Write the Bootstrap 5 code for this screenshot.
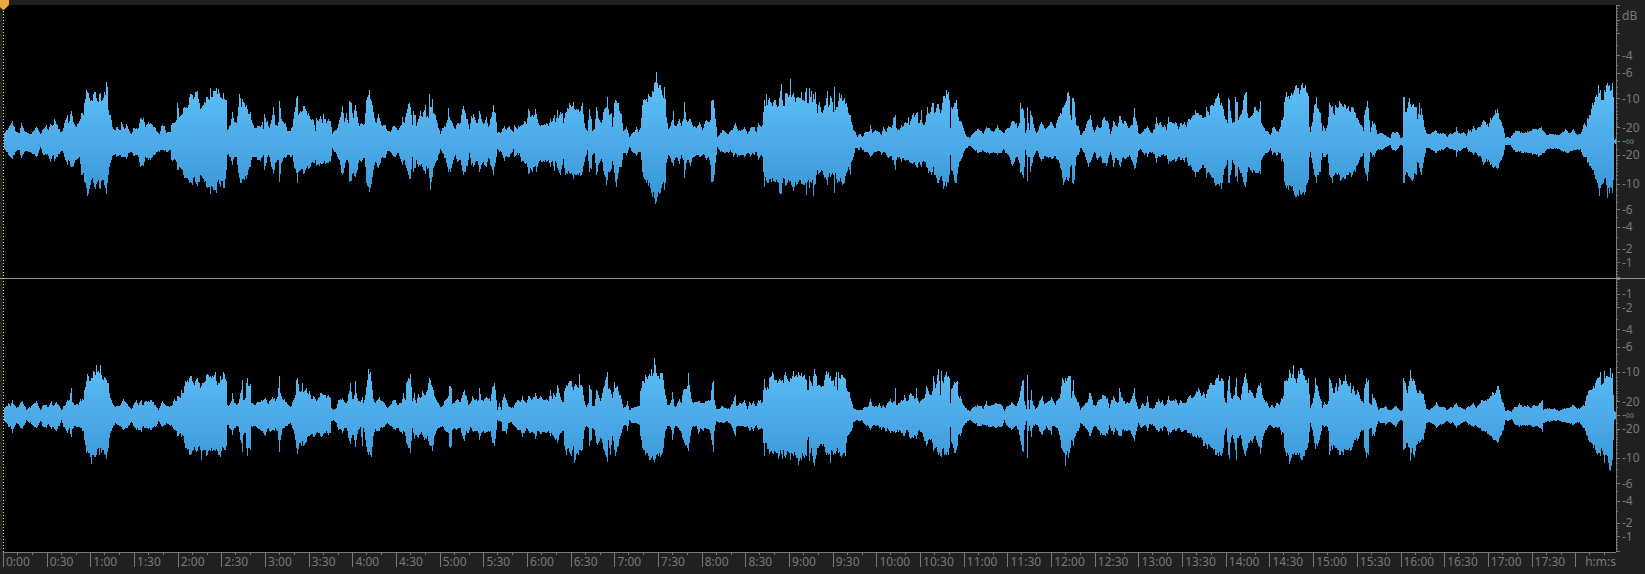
<!DOCTYPE html>
<html lang="en">
<head>
<meta charset="utf-8">
<meta name="viewport" content="width=device-width, initial-scale=1">
<title>Waveform editor</title>
<link href="https://cdn.jsdelivr.net/npm/bootstrap@5.3.0/dist/css/bootstrap.min.css" rel="stylesheet">
<style>
  :root { --panel: #202020; --ink: #747d79; }
  body { background: var(--panel); color: var(--ink); font: 12px/16px "Noto Sans", sans-serif; }
  .top-strip { height: 5px; }
  .left-gutter { width: 3px; }
  .scale { width: 29px; border-left: 1px solid var(--ink); }
  .wave { display: block; width: 100%; height: 100%; }
  .scale svg { display: block; width: 100%; height: 100%; }
  .lane { background: #000; min-height: 0; flex: 1 1 0; }
  .track { flex: 1 1 0; min-height: 0; }
  .rule-line { height: 1px; background: #8c9490; }
  .tick-layer { inset: 0; }
  .db-labels { height: 100%; padding-left: 5px; line-height: 12px; }
  .db-labels span { display: flex; align-items: center; height: 0; flex: none; white-space: nowrap; }
  .timeline { height: 22px; padding-left: 3px; padding-right: 29px; }
  .timeline ol { border-top: 1px solid var(--ink); list-style: none; }
  .timeline li { min-width: 0; flex-basis: 0; white-space: nowrap; }
  .timeline svg { inset: 0; width: 100%; height: 14px; }
  .timeline span { padding: 1px 0 0 3px; }
  .playhead { left: 3px; top: 5px; bottom: 22px; width: 1px;
    background: repeating-linear-gradient(#f3f08c 0 1px, #000 1px 3px); }
  .marker { left: 0; top: 0; width: 9px; height: 10px; }
</style>
</head>
<body class="vh-100 overflow-hidden">
<main class="d-flex flex-column h-100 position-relative">
  <div class="top-strip flex-shrink-0"></div>
  <section class="track d-flex" aria-label="Left channel">
    <div class="left-gutter"></div>
    <div class="lane"><svg class="wave" id="left" viewBox="0 0 1613 273" preserveAspectRatio="none"></svg></div>
    <div class="scale position-relative" data-top="1"></div>
  </section>
  <div class="rule-line flex-shrink-0"></div>
  <section class="track d-flex" aria-label="Right channel">
    <div class="left-gutter"></div>
    <div class="lane"><svg class="wave" id="right" viewBox="0 0 1613 273" preserveAspectRatio="none"></svg></div>
    <div class="scale position-relative"></div>
  </section>
  <footer class="timeline flex-shrink-0"><ol class="d-flex m-0 p-0 h-100" id="times"></ol></footer>
  <div class="playhead position-absolute"></div>
  <svg class="marker position-absolute" viewBox="0 0 9 10"><path d="M0 0H9V5L4 10H3L0 7Z" fill="#e8ab38"/></svg>
</main>
<script src="https://cdn.jsdelivr.net/npm/bootstrap@5.3.0/dist/js/bootstrap.bundle.min.js"></script>
<script>
// Envelopes: four blocks of 1200 units per channel, three units to a sample column.
// Each triple is position, upper edge, lower edge.
const envelopes = {
 left: { mid: 243, blocks: [
`10 225 262 18 210 275 26 205 285 37 182 298 46 212 275 58 220 270 65 190 295 76 215 272 95 222 280 105 203 287 112 205 288 120 222 262 130 208 285 140 194 285 145 210 288 152 192 305 160 194 285 164 178 302 172 195 290 180 217 275 186 212 272 194 190 290 202 165 315 206 190 300 213 153 322 220 185 318 230 200 300 238 182 290 244 160 345 250 165 340 253 130 365 259 90 385 263 95 407 270 122 375 275 120 360 280 102 370 286 95 388 292 122 365 300 98 387 304 122 362 312 95 375 317 105 385 319 65 402 322 80 370 325 150 345 330 165 310 337 200 288 342 210 285 350 200 290 360 210 285 364 187 290 372 208 290 378 192 298 385 207 280 393 222 275 400 205 288 408 205 285 416 205 290 422 175 320 430 175 318 436 200 290 445 185 300 455 193 295 462 200 285 470 213 275 477 222 275 485 197 270 492 197 272 500 218 275 510 215 270 515 195 300 522 190 298 528 180 305 532 130 330 538 170 320 545 165 328 550 145 345 556 143 355 565 135 360 571 102 365 578 105 375 584 110 350 592 93 378 598 130 365 605 145 348 612 125 365 620 112 380 628 120 380 631 84 402 636 110 380 641 93 390 648 85 398 655 88 360 660 110 380 664 115 362 669 98 385 674 118 385 678 120 330 681 210 285 690 195 292 697 155 315 703 185 290 710 190 290 714 140 340 718 102 355 724 140 370 728 118 358 734 128 360 740 135 358 745 162 330 752 155 320 757 188 290 764 205 290 775 198 300 780 200 302 786 185 290 790 208 285 793 162 330 798 185 310 803 182 292 808 205 290 815 180 320 820 142 342 825 195 310 832 198 300 836 185 300 839 122 365 843 178 310 850 185 295 857 190 295 862 213 285 870 213 290 878 200 285 883 155 325 888 115 340 891 108 370 895 165 335 902 152 330 912 137 340 920 152 325 930 178 320 936 178 305 941 180 310 946 212 300 950 175 318 958 178 318 962 168 308 966 188 312 971 162 310 978 190 308 984 178 310 990 182 305 996 222 265 1004 212 275 1012 203 290 1019 180 300 1025 155 340 1028 138 345 1033 185 325 1038 160 300 1044 190 310 1048 122 365 1054 130 362 1060 175 340 1066 135 350 1072 170 330 1078 198 300 1085 190 305 1092 192 295 1096 160 320 1100 120 370 1107 90 395 1112 118 385 1117 135 350 1122 175 315 1130 190 310 1135 162 325 1142 182 310 1148 198 290 1155 195 295 1162 213 272 1170 215 275 1177 200 285 1187 200 290 1195 210 278`,
`3 195 305 7 172 315 12 190 300 18 160 325 24 132 345 28 128 358 32 140 358 37 195 290 41 153 335 46 165 325 50 198 300 56 178 320 62 152 318 68 170 322 75 135 342 80 172 318 85 175 325 88 103 355 91 140 390 94 142 365 97 118 350 101 160 325 107 165 310 113 190 300 121 222 268 128 203 280 135 200 295 141 180 320 146 145 335 151 180 335 158 188 312 165 208 285 172 188 305 180 190 300 185 165 315 189 137 345 195 160 335 202 178 318 208 208 280 213 168 315 220 163 320 228 188 302 234 178 315 239 152 335 246 185 310 253 190 315 259 172 320 266 200 295 274 170 320 280 136 345 285 160 310 291 218 268 298 215 275 305 215 275 313 197 302 320 210 288 328 198 290 334 210 280 340 217 268 343 194 292 350 203 285 358 200 280 365 195 305 372 183 310 380 192 310 385 148 342 390 170 325 397 165 335 402 165 320 406 148 318 409 162 335 416 190 308 424 195 305 432 192 305 440 188 305 446 198 300 451 178 320 458 183 302 463 165 332 467 185 302 472 150 325 476 175 330 480 155 345 486 160 315 491 190 298 496 160 345 502 145 342 509 130 340 514 142 340 520 126 358 526 150 345 534 148 345 540 152 348 547 128 335 553 190 305 560 210 285 563 212 270 568 148 335 573 178 328 578 212 285 584 208 280 589 140 345 596 175 315 604 190 298 612 146 345 617 145 350 620 140 375 622 110 360 627 165 335 633 160 328 638 200 302 643 128 340 649 122 382 655 130 338 660 160 320 665 162 320 670 212 280 680 200 285 688 230 262 696 220 275 703 215 280 709 200 288 714 215 275 720 205 275 726 135 335 730 120 350 740 118 368 748 108 370 753 112 400 757 92 410 763 68 415 767 65 432 769 37 425 772 68 412 778 75 402 784 90 385 790 115 365 793 82 390 797 118 370 800 170 310 804 208 285 810 198 295 816 180 310 820 153 318 824 195 300 832 192 295 838 177 312 845 197 285 851 178 300 854 127 355 858 180 310 865 182 300 871 177 318 880 200 290 890 203 285 898 185 290 907 210 285 914 192 285 920 180 300 925 185 292 930 180 315 934 122 365 940 120 362 944 145 345 948 200 285 953 232 262 960 220 275 968 210 275 976 215 280 985 222 280 990 212 270 1000 205 290 1006 188 278 1012 208 290 1020 212 285 1028 210 285 1034 200 292 1042 222 278 1050 203 290 1058 200 280 1064 200 285 1070 217 275 1076 188 300 1083 200 285 1088 195 290 1092 120 382 1096 138 350 1099 102 362 1103 135 370 1108 115 358 1114 130 365 1120 125 362 1126 120 365 1132 140 365 1139 115 400 1143 72 402 1147 120 370 1153 138 358 1157 98 378 1163 102 370 1168 105 365 1171 58 362 1175 110 375 1180 98 392 1184 110 382 1189 115 375 1195 112 365`,
`3 97 372 8 120 372 13 122 375 16 95 368 19 84 404 22 130 365 25 130 360 28 84 385 31 110 365 34 92 370 37 125 360 40 103 407 44 118 375 47 97 372 52 158 330 58 126 340 63 155 330 70 150 345 76 135 350 82 92 375 86 140 350 92 108 350 96 125 340 99 155 345 103 80 398 107 150 340 113 140 370 118 98 365 123 105 365 128 122 375 134 115 370 138 130 340 145 160 320 150 165 345 155 185 305 160 210 290 165 215 265 172 230 265 177 222 270 182 222 262 187 230 270 193 220 275 200 215 275 208 213 285 211 196 290 216 218 285 222 212 275 230 213 275 238 215 272 245 225 285 250 202 275 258 215 285 264 198 295 270 202 288 278 195 300 281 175 300 285 165 330 290 205 300 297 210 290 303 195 305 310 198 295 315 185 302 321 190 300 325 172 300 329 195 305 336 165 312 341 160 310 347 165 315 351 155 325 355 188 308 361 180 315 364 150 320 368 190 305 374 195 305 379 165 320 382 140 325 386 160 340 391 155 335 394 140 345 399 128 322 402 160 345 408 145 355 414 132 370 421 160 350 426 130 362 430 108 388 435 115 365 439 90 382 445 95 368 448 120 345 451 205 285 455 140 330 460 142 345 465 130 370 470 120 368 474 170 320 480 182 302 486 195 290 492 212 272 500 228 265 508 233 257 515 225 262 525 212 272 535 208 278 545 212 275 551 222 272 558 200 280 566 203 280 573 213 280 582 212 280 588 205 278 592 195 285 597 210 278 605 212 278 611 220 268 618 208 280 626 203 285 632 197 300 638 182 318 642 185 305 648 190 290 653 205 290 657 190 310 660 130 340 666 145 345 670 150 355 674 175 320 677 218 270 680 210 285 682 140 362 686 190 290 689 210 290 692 152 335 697 170 310 702 205 285 708 220 272 716 210 280 723 185 302 730 195 298 737 208 288 744 198 295 751 185 292 757 192 298 765 205 288 771 180 300 776 172 300 782 160 325 787 145 355 790 140 375 795 130 360 801 98 360 807 108 355 812 165 320 814 180 315 818 115 368 822 125 360 826 170 318 830 195 290 836 198 285 840 225 265 845 225 265 850 212 275 857 205 290 862 182 308 865 180 322 870 165 305 876 200 292 884 215 275 892 195 300 898 205 290 904 200 295 908 180 310 913 170 308 920 182 318 925 190 295 931 222 275 936 200 300 940 182 322 946 195 295 953 200 300 958 168 315 962 167 320 967 190 295 973 182 298 979 190 295 985 205 290 992 198 290 998 195 305 1003 143 328 1007 175 325 1011 195 290 1015 220 272 1024 220 270 1032 208 285 1040 203 280 1043 198 290 1048 210 275 1055 220 280 1062 208 282 1069 172 310 1074 195 288 1080 185 290 1087 200 285 1092 195 288 1099 210 285 1105 172 312 1112 185 305 1120 188 300 1128 188 302 1135 207 290 1140 188 300 1147 195 295 1152 185 305 1158 200 290 1165 178 318 1174 175 320 1182 165 335 1187 150 350 1193 160 335 1198 165 330`,
`3 165 325 10 175 315 16 170 325 20 142 355 25 155 335 29 165 340 32 138 345 38 135 355 44 130 368 50 115 375 55 100 372 59 115 378 64 128 388 69 148 345 75 178 320 81 190 300 85 115 368 89 120 370 93 175 330 98 190 300 104 185 315 107 112 350 111 125 365 115 180 320 121 165 340 126 150 350 131 120 365 135 100 380 139 95 365 143 160 335 148 175 325 156 165 338 163 142 332 168 150 340 175 155 340 181 122 342 185 190 300 192 205 285 200 212 280 205 215 275 211 225 265 218 205 285 222 200 275 228 213 288 235 215 275 240 200 280 245 180 302 250 170 305 254 125 365 259 97 385 264 108 390 269 118 375 274 98 380 279 100 392 284 90 405 288 75 410 294 85 408 300 90 402 307 68 400 312 85 405 316 75 395 320 95 375 325 108 360 328 200 290 331 215 275 338 185 310 343 135 345 348 112 370 353 145 345 360 158 335 364 190 300 367 213 280 371 197 290 376 212 290 381 195 282 385 170 310 388 128 345 393 140 355 397 138 370 402 165 345 407 135 340 412 145 345 417 122 345 421 130 362 428 138 355 434 132 358 440 148 345 446 138 345 450 155 340 455 140 350 461 145 335 467 158 335 473 175 315 479 188 300 484 195 290 489 212 280 493 165 325 497 150 340 502 122 362 506 145 335 510 215 275 513 200 280 517 183 290 522 190 292 527 195 280 532 222 270 540 220 268 548 220 270 555 225 262 563 230 258 571 233 256 578 215 270 586 218 272 594 218 265 600 233 255 606 230 258 609 110 368 613 112 368 617 155 345 622 145 340 627 115 350 633 142 360 638 135 362 643 142 340 648 142 345 653 178 305 657 128 325 661 165 335 665 145 345 669 180 310 674 200 290 680 220 265 690 222 268 700 215 272 706 210 280 712 220 272 720 220 272 728 218 270 735 222 265 742 230 262 750 220 268 760 218 270 766 215 270 770 202 290 774 218 270 782 222 272 790 216 265 798 228 262 806 208 275 813 215 275 820 198 285 828 210 278 836 200 290 843 195 295 849 180 315 857 185 305 864 200 300 870 175 315 877 175 320 882 165 320 886 150 318 889 160 325 893 148 328 898 178 308 905 185 300 910 205 285 916 233 255 925 230 255 932 235 255 940 218 270 948 213 275 957 213 275 966 220 278 975 215 278 985 215 278 992 212 280 1000 207 282 1008 207 285 1016 207 290 1024 200 285 1030 212 280 1040 225 270 1050 222 265 1060 222 268 1070 225 265 1080 222 270 1090 215 275 1097 208 275 1105 218 278 1113 215 272 1120 208 270 1128 222 270 1140 222 268 1147 208 285 1153 190 290 1158 200 290 1163 175 310 1170 165 318 1177 130 330 1183 125 345 1188 105 360 1192 110 370 1195 75 385 1198 100 408 1201 90 385 1205 120 375 1210 120 370 1214 90 358 1218 75 375 1221 68 415 1225 78 385 1229 75 400 1233 90 385 1237 68 400 1239 110 360 1241 205 280 1243 240 250 1248 235 252`
 ]},
 right: { mid: 226, blocks: [
`10 208 240 18 200 250 25 190 262 30 198 260 37 182 280 44 195 262 50 205 250 58 195 260 66 185 268 72 198 255 80 210 242 88 203 250 95 200 252 104 190 262 109 185 265 115 200 255 121 210 245 130 195 262 138 195 265 145 202 252 154 185 268 160 200 262 170 187 275 178 198 258 184 212 240 190 200 262 196 195 268 202 180 280 208 182 265 213 145 292 218 188 268 226 195 260 234 195 262 242 178 265 250 182 275 254 150 300 258 125 340 262 102 335 268 125 340 275 115 373 280 95 345 285 105 352 289 77 345 294 95 325 298 100 345 301 77 325 305 105 340 310 122 330 316 115 345 319 122 358 325 130 325 330 175 280 337 190 265 342 200 255 350 200 252 358 198 260 365 190 262 371 178 272 378 190 265 385 198 260 393 208 248 400 195 258 408 182 270 415 195 270 420 185 270 423 180 278 428 195 262 437 185 265 445 185 268 453 182 270 460 188 262 468 202 258 475 210 245 480 200 252 486 185 262 495 195 255 502 200 252 510 200 258 518 195 262 523 178 270 528 185 275 533 168 288 540 175 280 545 150 292 550 160 290 556 125 325 562 122 330 568 115 345 573 110 342 579 130 330 586 125 332 592 115 335 598 130 320 603 140 362 608 130 335 614 128 330 620 105 348 625 107 335 630 110 335 635 115 325 640 112 330 646 97 335 652 135 335 657 130 345 661 108 352 665 122 335 670 98 325 675 118 330 678 125 320 681 195 255 688 195 265 693 185 270 697 160 285 702 190 265 708 195 260 715 190 262 720 160 300 724 150 310 727 122 338 731 180 285 736 175 280 739 130 325 742 115 350 746 140 325 751 132 332 754 190 260 762 197 258 770 190 262 777 188 268 783 182 275 790 180 280 797 175 288 805 192 265 812 180 278 817 172 272 822 175 275 827 185 265 832 172 275 837 165 300 839 110 338 842 160 300 846 178 268 853 178 265 860 188 260 868 200 252 874 198 255 880 180 270 885 165 300 889 120 325 893 115 342 897 155 310 903 155 320 907 130 305 911 158 320 918 145 308 924 162 290 929 155 290 935 178 282 941 170 292 948 185 280 955 175 280 960 160 290 966 162 290 972 165 280 980 175 275 985 165 285 990 175 280 995 205 245 1000 210 242 1008 205 250 1015 182 270 1022 178 268 1027 175 280 1033 188 265 1040 190 265 1047 155 305 1051 130 312 1056 178 285 1062 165 300 1066 125 322 1070 160 300 1075 185 270 1082 188 262 1087 172 320 1091 190 265 1096 165 300 1101 120 338 1105 88 345 1110 98 345 1115 125 352 1120 178 290 1126 190 268 1132 182 275 1138 172 275 1145 185 262 1153 190 262 1162 205 250 1170 195 258 1178 185 262 1185 182 270 1193 195 265`,
`3 190 278 7 178 282 11 160 275 16 180 290 20 130 310 26 115 325 31 103 340 36 185 265 42 160 298 48 190 285 54 162 295 60 175 282 66 155 285 72 165 300 78 158 298 82 150 290 88 115 315 92 120 318 97 142 335 102 170 290 109 180 275 115 190 265 121 203 262 130 195 262 137 180 275 144 170 280 149 140 322 154 145 318 158 192 270 165 185 268 172 178 268 180 188 265 186 165 290 193 152 305 198 170 275 205 195 280 212 190 262 217 170 275 222 182 275 228 178 275 234 182 280 239 145 300 244 180 280 252 178 280 260 172 278 268 175 278 272 185 275 278 142 310 283 130 320 288 180 270 293 210 242 299 190 245 303 210 248 308 180 275 313 162 275 319 182 282 324 200 250 332 202 248 340 205 255 345 190 262 351 180 270 360 188 270 367 170 292 373 185 280 379 190 265 386 168 275 394 182 278 400 172 280 406 160 298 413 178 275 420 170 282 428 178 278 436 180 280 444 185 275 450 150 288 456 178 285 460 160 290 466 172 300 472 135 310 477 160 285 484 180 280 490 188 275 494 155 318 500 135 345 506 130 325 513 125 348 519 150 320 524 140 370 529 135 342 535 145 345 538 102 330 542 135 332 548 142 330 553 185 270 560 202 258 564 190 265 568 135 318 573 150 300 577 200 265 584 198 272 588 150 310 594 165 310 600 185 295 607 160 310 612 138 335 617 120 345 622 97 368 626 148 300 631 150 345 637 175 290 643 128 330 647 145 350 652 140 322 656 155 320 662 165 290 669 205 258 678 195 260 683 185 275 687 212 242 695 205 250 704 203 250 712 200 252 719 200 255 722 155 290 727 125 325 732 130 330 737 105 345 744 108 350 750 108 362 754 88 355 758 108 350 761 100 362 764 55 368 768 100 345 774 110 350 780 100 352 786 100 340 791 120 325 796 165 275 802 195 260 807 195 258 814 180 270 818 158 300 823 200 265 830 200 258 838 178 270 844 190 280 851 150 300 855 148 320 861 140 325 865 100 335 869 135 310 873 178 270 880 190 260 888 188 260 895 185 282 902 190 265 910 190 275 917 185 265 925 182 268 932 180 280 936 130 315 940 123 338 944 180 275 950 208 245 957 208 250 965 200 248 973 205 250 980 205 245 988 208 250 995 195 260 1001 185 275 1005 165 288 1009 200 262 1017 190 260 1025 192 258 1032 182 262 1037 190 262 1042 208 260 1048 188 275 1054 195 262 1060 185 275 1068 200 255 1075 180 272 1082 182 268 1087 188 268 1093 118 350 1097 145 310 1104 148 328 1109 115 342 1117 97 340 1123 122 335 1129 120 340 1135 125 358 1140 120 330 1146 122 358 1150 130 330 1156 98 355 1162 118 335 1170 115 360 1175 118 340 1180 95 348 1186 110 345 1192 112 355 1196 98 375`,
`3 100 360 8 112 340 13 105 355 18 120 350 22 150 300 25 152 292 28 110 365 33 130 325 38 138 350 43 88 378 48 110 345 53 140 325 60 140 312 68 138 320 74 120 322 79 95 345 84 98 320 86 155 345 90 110 370 94 125 330 99 120 345 104 140 340 109 97 335 112 150 325 116 98 340 121 118 348 127 105 345 133 115 340 137 118 350 142 155 290 149 158 282 155 185 275 160 205 248 168 210 242 176 210 245 184 212 242 190 205 250 198 202 258 206 198 258 211 178 270 216 198 258 225 198 260 232 202 255 238 190 265 244 205 270 251 195 262 257 205 275 263 190 265 271 178 280 278 190 275 283 185 275 286 145 280 290 195 278 297 190 272 304 180 280 309 182 288 313 165 290 319 185 270 326 180 278 332 160 298 339 168 295 345 175 290 349 145 298 353 175 285 359 190 270 366 178 280 373 175 305 379 138 320 385 155 300 390 165 300 396 155 310 401 108 335 405 145 325 411 105 338 415 88 345 419 125 340 422 165 350 425 95 352 429 130 325 434 112 345 439 97 345 444 108 345 448 115 325 451 190 262 455 148 308 460 135 325 466 130 340 471 125 320 475 170 285 481 170 290 487 190 265 494 200 255 502 210 245 510 215 240 517 205 248 526 200 252 535 198 258 543 198 260 551 208 255 559 185 258 566 200 262 574 197 262 582 192 262 590 190 265 598 192 262 606 198 260 613 215 240 620 202 255 627 195 265 634 188 270 642 195 262 650 198 260 655 185 270 660 155 305 665 140 315 670 120 338 674 185 270 679 208 245 682 105 355 686 180 275 689 208 258 693 152 292 698 185 265 706 208 252 714 195 262 720 180 278 726 170 285 732 192 270 739 190 260 746 185 270 753 172 285 758 178 260 765 195 262 772 180 265 778 175 285 784 140 325 788 115 330 792 130 340 796 115 378 801 115 335 805 108 355 811 110 325 815 175 300 819 122 320 824 165 295 830 178 280 836 188 275 842 210 250 850 198 258 857 190 265 863 188 272 868 160 290 874 170 280 880 195 262 888 195 262 895 180 270 902 178 285 909 165 285 915 170 288 921 175 282 928 205 255 934 182 275 940 168 285 946 185 265 954 188 285 958 145 288 963 172 290 968 175 270 975 192 272 983 188 275 990 185 275 997 170 290 1002 145 305 1007 178 285 1015 208 250 1022 205 262 1028 190 262 1035 200 255 1042 170 275 1047 205 252 1055 205 255 1062 205 260 1068 188 270 1074 178 278 1080 190 265 1086 180 275 1094 200 258 1100 192 265 1105 168 285 1112 185 280 1120 182 270 1127 178 275 1134 195 265 1140 180 272 1147 190 278 1155 190 270 1163 178 280 1170 165 282 1177 175 288 1184 170 290 1190 155 295 1196 145 292`,
`3 168 295 10 158 320 16 175 310 22 150 328 27 135 315 33 130 325 39 135 330 45 120 345 51 115 340 55 107 348 60 125 345 65 115 350 69 125 325 73 175 285 80 190 265 84 120 345 88 108 358 92 160 310 98 178 285 103 165 310 108 115 360 113 170 295 120 180 285 126 140 320 131 130 330 136 100 350 141 130 325 146 160 310 152 150 300 158 160 310 165 175 290 171 145 310 175 135 320 181 130 342 186 165 300 192 180 280 200 185 270 207 205 255 214 195 260 222 205 265 230 190 262 238 195 262 245 175 285 250 170 280 254 125 325 260 120 350 265 115 345 268 90 373 274 115 355 280 75 345 284 115 340 289 130 345 294 95 345 300 85 355 307 90 360 312 110 350 317 120 330 322 130 325 326 115 310 330 205 250 337 190 270 342 160 310 347 115 328 352 140 318 358 170 300 363 185 275 368 205 255 373 188 262 379 195 258 384 185 275 388 115 345 393 130 320 398 145 330 404 160 320 409 130 325 413 155 330 419 115 345 424 135 335 430 125 345 435 105 330 439 125 330 445 140 330 451 130 335 455 160 330 460 138 310 466 165 300 472 150 305 478 165 290 484 185 270 490 190 270 494 145 325 499 115 355 505 120 345 509 190 268 514 195 265 518 162 290 524 175 290 530 190 262 536 210 245 545 205 250 555 200 255 565 210 248 575 210 250 585 198 262 593 205 252 602 215 240 607 210 245 610 115 332 615 130 325 621 160 310 627 125 325 632 92 365 637 125 325 643 125 352 648 150 315 653 160 312 658 150 310 664 160 300 670 162 300 674 180 280 679 207 250 688 210 248 698 205 252 708 188 265 716 200 258 724 202 255 732 202 250 741 212 245 750 202 252 760 202 250 770 190 265 778 202 255 786 205 250 795 210 245 804 198 255 812 200 255 820 190 262 828 205 260 836 195 265 843 182 272 850 185 275 857 182 278 864 178 282 872 170 290 878 158 295 884 165 300 889 150 305 893 140 310 899 150 295 905 178 285 910 190 270 915 215 240 925 210 245 934 216 238 943 202 252 952 202 255 958 190 262 966 202 255 975 198 260 985 198 255 994 205 258 1000 195 262 1008 200 260 1016 195 262 1023 185 268 1027 182 278 1031 210 250 1042 206 245 1052 208 245 1062 206 243 1072 212 242 1082 212 245 1092 205 248 1102 205 250 1112 202 252 1120 195 255 1128 205 250 1138 208 248 1146 198 262 1153 198 265 1160 170 285 1166 155 300 1173 150 310 1180 140 325 1187 130 330 1193 115 345 1200 98 350 1205 135 325 1210 130 345 1214 95 370 1218 110 345 1223 108 350 1227 112 390 1230 85 395 1234 115 378 1237 100 360 1240 165 300 1243 215 240 1248 215 238`
 ]}
};

function drawWave(id) {
  const { mid, blocks } = envelopes[id];
  const points = [];
  blocks.forEach((text, block) => {
    const n = text.split(' ').map(Number);
    for (let i = 0; i < n.length; i += 3) {
      const column = Math.floor((n[i] + block * 1200) / 3) - 3;
      const up = (mid - n[i + 1]) / 3, down = (n[i + 2] - mid) / 3;
      const last = points[points.length - 1];
      if (last && last[0] === column) {
        last[1] = Math.max(last[1], up);
        last[2] = Math.max(last[2], down);
      } else points.push([column, up, down]);
    }
  });
  let path = '', k = 0;
  for (let x = 0; x < 1613; x++) {
    while (k < points.length - 2 && points[k + 1][0] <= x) k++;
    const [a, b] = [points[k], points[k + 1]];
    const t = Math.max(0, Math.min(1, (x - a[0]) / (b[0] - a[0])));
    // columns between two peaks vary a little, the peaks themselves are exact
    const grain = t === 0 || t === 1 ? 1 : .9 + ((x * 7919 + 13) % 17) / 100;
    const up = Math.max(1, Math.round((a[1] + (b[1] - a[1]) * t) * grain));
    const down = Math.max(1, Math.round((a[2] + (b[2] - a[2]) * t) * grain));
    path += `M${x} ${136 - up}h1v${up + down}h-1z`;
  }
  document.getElementById(id).innerHTML =
    `<defs><linearGradient id="${id}-fill" gradientUnits="userSpaceOnUse" x1="0" y1="66" x2="0" y2="206">
       <stop offset="0" stop-color="#62c3fa"/><stop offset=".5" stop-color="#4cabe8"/><stop offset="1" stop-color="#3692d2"/>
     </linearGradient></defs><path d="${path}" fill="url(#${id}-fill)" shape-rendering="crispEdges"/>`;
}
drawWave('left');
drawWave('right');

// Decibel scale, mirrored around the silent centre line
const place = (db, side) => 50 + side * 49.8 * Math.pow(10, db / 20);
document.querySelectorAll('.scale').forEach(scale => {
  const major = [0, -1, -2, -4, -6, -10, -20, -Infinity];
  const minor = [-3, -5, -7, -8, -9, -11, -12, -13, -14, -15, -16, -17, -18, -19, -25];
  for (let d = 1; d < 10; d++) minor.push(-d / 5);
  const line = (y, length) => `<line x1="0" x2="${length}" y1="${y}%" y2="${y}%"/>`;
  let ticks = '';
  [-1, 1].forEach(side => {
    major.forEach(db => ticks += line(place(db, side), 3));
    minor.forEach(db => ticks += line(place(db, side), 1));
  });
  const levels = [-1, -2, -4, -6, -10, -20];
  const upper = scale.dataset.top ? levels.slice(2) : levels;
  const labels = [...upper.map(db => [place(db, -1), db]), [50, '-∞'],
                  ...levels.slice().reverse().map(db => [place(db, 1), db])];
  if (scale.dataset.top) labels.unshift([4, 'dB']);
  let last = 0, html = '';
  labels.forEach(([at, text]) => {
    html += `<i style="flex:${at - last} 0 0"></i><span>${text}</span>`;
    last = at;
  });
  html += `<i style="flex:${100 - last} 0 0"></i>`;
  scale.innerHTML = `<svg class="tick-layer position-absolute" stroke="#747d79" shape-rendering="crispEdges">${ticks}</svg>
    <div class="db-labels d-flex flex-column">${html}</div>`;
});

// Time ruler: a label every 30 s, a short tick every 10 s
const duration = 1108;
let ruler = '';
for (let s = 0; s < duration; s += 30) {
  const span = Math.min(30, duration - s);
  const text = s < 1080 ? `${Math.floor(s / 60)}:${String(s % 60).padStart(2, '0')}` : 'h:m:s';
  ruler += `<li class="position-relative d-flex ${s < 1080 ? '' : 'justify-content-end'}" style="flex-grow:${span}">
    <svg class="position-absolute" stroke="#747d79" shape-rendering="crispEdges"><path d="M.5 0V14"/>
    <line x1="${1000 / span}%" x2="${1000 / span}%" y1="0" y2="2"/><line x1="${2000 / span}%" x2="${2000 / span}%" y1="0" y2="2"/></svg>
    <span>${text}</span></li>`;
}
document.getElementById('times').innerHTML = ruler;
</script>
</body>
</html>
